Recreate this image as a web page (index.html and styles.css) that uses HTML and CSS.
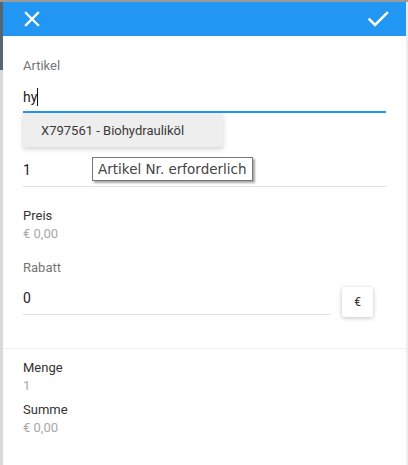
FILE: index.html
```html
<!DOCTYPE html>
<html>
<head>
<meta charset="utf-8">
<link rel="stylesheet" href="styles.css">
</head>
<body>
<div class="dialog">
  <header class="bar">
    <svg class="icon" width="18" height="18" viewBox="0 0 18 18"><path d="M3 3L15 15M15 3L3 15" stroke="#fff" stroke-width="2.3" stroke-linecap="square"/></svg>
    <svg class="icon" width="22" height="18" viewBox="0 0 22 18"><path d="M2.5 9.5L8 15L20 3" stroke="#fff" stroke-width="2.5" fill="none" stroke-linecap="square"/></svg>
  </header>
  <section class="form">
    <div class="field first">
      <div class="label">Artikel</div>
      <div class="input active"><span>hy</span><span class="caret"></span></div>
      <div class="menu"><div class="menu-item">X797561 - Biohydrauliköl</div></div>
    </div>
    <div class="field qty">
      <div class="input plain"><span>1</span></div>
      <div class="tooltip">Artikel Nr. erforderlich</div>
    </div>
    <div class="info">
      <div class="info-label">Preis</div>
      <div class="info-value">€ 0,00</div>
    </div>
    <div class="field rabatt">
      <div class="label">Rabatt</div>
      <div class="row">
        <div class="input plain grow"><span>0</span></div>
        <button class="cur">€</button>
      </div>
    </div>
  </section>
  <section class="summary">
    <div class="info-label">Menge</div>
    <div class="info-value">1</div>
    <div class="info-label gap">Summe</div>
    <div class="info-value">€ 0,00</div>
  </section>
</div>
</body>
</html>
```
FILE: styles.css
```css
* { box-sizing: border-box; }
html, body { margin: 0; height: 100%; }
body {
  font-family: Roboto, "Noto Sans", sans-serif;
  background: linear-gradient(to bottom, #9a9a9a 0 2px, #56656e 2px 70px, #d9d9d9 70px);
  padding: 2px 2px 0 3px;
  overflow: hidden;
}
.dialog {
  background: #fff;
  height: 100%;
  display: flex;
  flex-direction: column;
  box-shadow: 1px 0 0 #eeeeee, 2px 0 0 #ececec;
}
.bar {
  height: 34px;
  background: #2196f3;
  display: flex;
  align-items: center;
  justify-content: space-between;
  padding: 0 17px 0 20px;
  flex: none;
}
.icon { display: block; }
.form {
  padding: 22px 20px 0 20px;
  display: flex;
  flex-direction: column;
}
.field { position: relative; }
.label {
  font-size: 13px;
  line-height: 16px;
  color: #757575;
}
.input {
  font-size: 14px;
  line-height: 20px;
  color: #212121;
  display: flex;
  align-items: center;
}
.input.active {
  margin-top: 13px;
  padding-bottom: 4px;
  border-bottom: 2px solid #2196f3;
}
.caret {
  display: inline-block;
  width: 1px;
  height: 18px;
  background: #111;
}
.input.plain {
  padding-bottom: 6px;
  border-bottom: 1px solid #e0e0e0;
}
.qty { margin-top: 47px; }
.menu {
  position: absolute;
  left: 0;
  top: 55px;
  width: 200px;
  height: 34px;
  background: #eeeeee;
  box-shadow: 0 2px 5px rgba(0,0,0,0.18);
  display: flex;
  align-items: center;
  z-index: 2;
}
.menu-item {
  padding-left: 18px;
  font-size: 13px;
  color: #3a3a3a;
}
.tooltip {
  position: absolute;
  left: 69px;
  top: -3px;
  height: 24px;
  padding: 0 5px;
  border: 1px solid #767676;
  background: #fff;
  font-family: "DejaVu Sans", sans-serif;
  font-size: 13.5px;
  line-height: 22px;
  color: #444;
  box-shadow: 2px 2px 2px rgba(0,0,0,0.35);
  white-space: nowrap;
}
.info { margin-top: 21px; }
.info-label {
  font-size: 13px;
  line-height: 16px;
  color: #333;
}
.info-value {
  font-size: 13px;
  line-height: 18px;
  color: #a8a8a8;
  margin-top: 1px;
}
.rabatt { margin-top: 17px; }
.row {
  display: flex;
  align-items: flex-start;
  margin-top: 12px;
}
.grow { flex: 1; }
.cur {
  margin: -1px 13px 0 12px;
  width: 31px;
  height: 30px;
  border: none;
  background: #fff;
  border-radius: 2px;
  box-shadow: 0 1px 4px rgba(0,0,0,0.25);
  font-family: Roboto, sans-serif;
  font-size: 12px;
  color: #333;
  padding: 0;
}
.summary {
  margin-top: 31px;
  border-top: 1px solid #eeeeee;
  padding: 11px 20px 0 20px;
}
.gap { margin-top: 7px; }
```
